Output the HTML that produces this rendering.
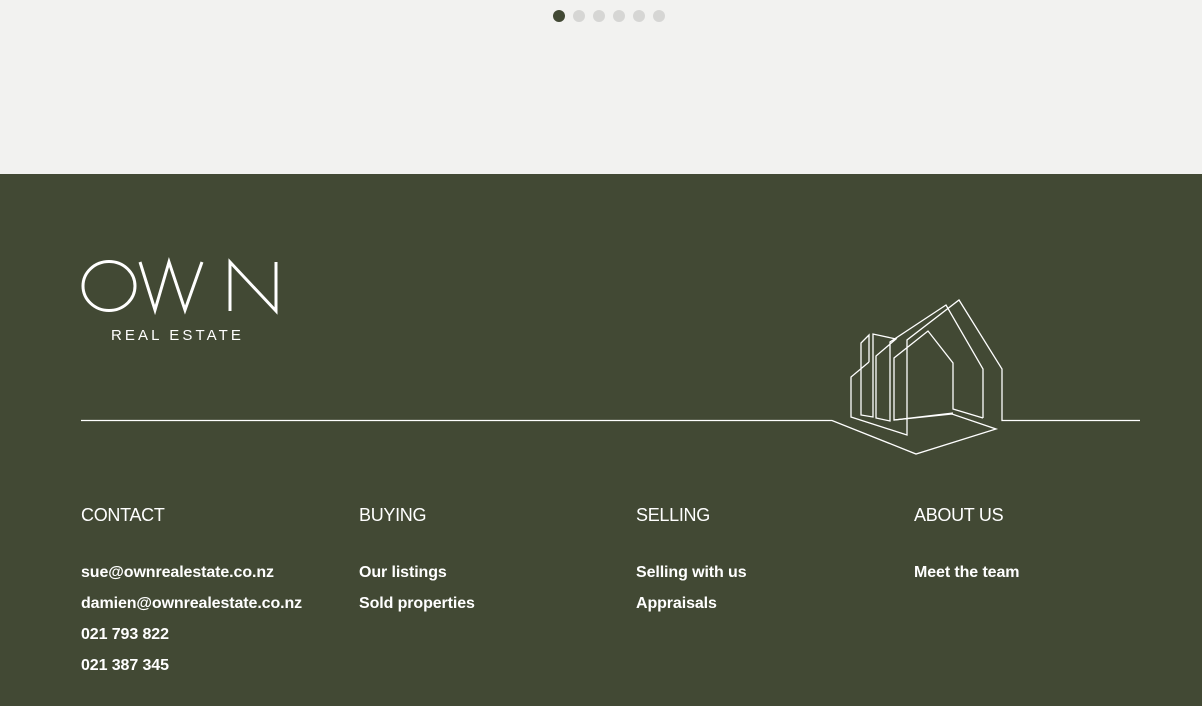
<!DOCTYPE html>
<html><head><style>
html,body{margin:0;padding:0;width:1202px;height:706px;overflow:hidden;font-family:"Liberation Sans",sans-serif}
.top{position:absolute;left:0;top:0;width:1202px;height:174px;background:#f2f2f0}
.dot{position:absolute;top:10px;width:12px;height:12px;border-radius:50%;background:#d6d6d4}
.foot{position:absolute;left:0;top:174px;width:1202px;height:532px;background:#424934;color:#fff}
.h{position:absolute;top:331px;font-size:18px;letter-spacing:-0.3px}
.l{position:absolute;font-size:16px;font-weight:bold;letter-spacing:-0.1px}
</style></head><body>
<div class="top">
<div class="dot" style="left:553px;background:#424934"></div>
<div class="dot" style="left:573px"></div>
<div class="dot" style="left:593px"></div>
<div class="dot" style="left:613px"></div>
<div class="dot" style="left:633px"></div>
<div class="dot" style="left:653px"></div>
</div>
<div class="foot">
<svg width="1202" height="532" style="position:absolute;left:0;top:0" viewBox="0 174 1202 532" fill="none" stroke="#fff" stroke-width="1.3">
<ellipse cx="109" cy="286" rx="26" ry="24.5" stroke-width="3"/>
<polyline points="140,262 155,310 169,262 185,310 202,262" stroke-width="3"/>
<polyline points="230,311 230,262 276,311 276,262" stroke-width="3"/>
<polyline points="81,420.5 832,420.5 916,454 996,429 952,414 894,420"/>
<polyline points="1140,420.5 1002,420.5 1002,369 959,300 907,340 907,435 851,417 851,377 869,362"/>
<polyline points="983,418 983,369 946,305 890,342 890,421 876,418 876,356 896,339 873,334 873,417 861,415 861,343 869,335 869,362"/>
<polyline points="983,418 953,409 953,363 928,331 894,358 894,420 953,413"/>
</svg>
<div style="position:absolute;left:111px;top:153px;font-size:15px;letter-spacing:3.1px">REAL ESTATE</div>
<div class="h" style="left:81px">CONTACT</div>
<div class="h" style="left:359px">BUYING</div>
<div class="h" style="left:636px">SELLING</div>
<div class="h" style="left:914px">ABOUT US</div>
<div class="l" style="left:81px;top:390px">sue@ownrealestate.co.nz</div>
<div class="l" style="left:81px;top:421px">damien@ownrealestate.co.nz</div>
<div class="l" style="left:81px;top:452px">021 793 822</div>
<div class="l" style="left:81px;top:483px">021 387 345</div>
<div class="l" style="left:359px;top:390px">Our listings</div>
<div class="l" style="left:359px;top:421px">Sold properties</div>
<div class="l" style="left:636px;top:390px">Selling with us</div>
<div class="l" style="left:636px;top:421px">Appraisals</div>
<div class="l" style="left:914px;top:390px">Meet the team</div>
</div>
</body></html>
